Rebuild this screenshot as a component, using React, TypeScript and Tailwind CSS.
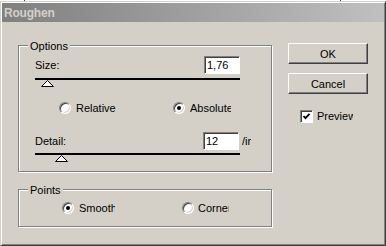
import React from 'react';

function Radio({ checked }: { checked?: boolean }) {
  return (
    <span className="flex h-[12px] w-[12px] shrink-0 items-center justify-center rounded-full border border-t-[#808080] border-l-[#808080] border-r-white border-b-white bg-white shadow-[inset_1px_1px_0_#404040,inset_-1px_-1px_0_#d4d0c8]">
      {checked && <span className="h-[4px] w-[4px] rounded-full bg-black" />}
    </span>
  );
}

function Field({ value }: { value: string }) {
  return (
    <div className="flex h-[18px] w-[36px] shrink-0 items-center border border-t-[#808080] border-l-[#808080] border-r-white border-b-white bg-white pl-[2px] shadow-[inset_1px_1px_0_#404040]">
      {value}
    </div>
  );
}

function Thumb() {
  return (
    <svg width="13" height="7" viewBox="0 0 13 7" className="block">
      <polygon points="6.5,0.5 12.5,6.5 0.5,6.5" fill="#fff" stroke="#000" strokeWidth="1" />
    </svg>
  );
}

function Button({ label }: { label: string }) {
  return (
    <div className="flex h-[21px] w-[80px] items-center justify-center border border-t-white border-l-white border-r-[#404040] border-b-[#404040] shadow-[inset_-1px_-1px_0_#808080]">
      {label}
    </div>
  );
}

export default function App() {
  return (
    <div className="h-[246px] w-[386px] bg-white font-['Liberation_Sans',Arial,sans-serif] text-[11px] leading-[14px] text-black">
      <div className="flex h-[1px]">
        <span className="ml-[24px] w-[1px] bg-[#404040]" />
        <span className="ml-[315px] w-[1px] bg-[#404040]" />
      </div>

      {/* dialog window */}
      <div className="flex h-[245px] w-[386px] flex-col border border-t-[#d4d0c8] border-l-[#d4d0c8] border-r-[#404040] border-b-[#404040] bg-[#d4d0c8] p-[1px] shadow-[inset_1px_1px_0_#fff,inset_-1px_-1px_0_#808080]">
        <div className="flex h-[19px] shrink-0 items-center bg-gradient-to-r from-[#808080] to-[#c0c0c0] pl-[2px] pt-[1px] text-[12px] font-bold tracking-[-0.2px] text-[#d4d0c8]">
          Roughen
        </div>

        <div className="flex items-start pl-[16px]">
          {/* left column */}
          <div className="mt-[23px] flex flex-col">
            {/* Options */}
            <div className="h-[127px] w-[254px] border border-[#808080] shadow-[inset_1px_1px_0_#fff,1px_1px_0_#fff]">
              <div className="-mt-[7px] ml-[9px] w-fit bg-[#d4d0c8] px-[2px]">Options</div>

              <div className="mt-[3px] ml-[16px] flex h-[18px] w-[205px] items-center justify-between">
                <span>Size:</span>
                <Field value="1,76" />
              </div>
              <div className="mt-[4px] ml-[16px] h-[2px] w-[205px] bg-black" />
              <div className="ml-[22px]">
                <Thumb />
              </div>

              <div className="mt-[14px] ml-[40px] flex h-[14px] items-center">
                <div className="flex w-[114px] items-center gap-[5px]">
                  <Radio />
                  <span>Relative</span>
                </div>
                <div className="flex items-center gap-[5px]">
                  <Radio checked />
                  <span className="w-[41px] overflow-hidden whitespace-nowrap">Absolute</span>
                </div>
              </div>

              <div className="mt-[17px] ml-[16px] flex h-[18px] w-[221px] items-center">
                <span className="flex-1">Detail:</span>
                <Field value="12" />
                <span className="ml-[3px] w-[9px] overflow-hidden whitespace-nowrap">/in</span>
                <span className="w-[5px]" />
              </div>
              <div className="mt-[3px] ml-[16px] h-[2px] w-[205px] bg-black" />
              <div className="ml-[36px]">
                <Thumb />
              </div>
            </div>

            {/* Points */}
            <div className="mt-[17px] h-[38px] w-[254px] border border-[#808080] shadow-[inset_1px_1px_0_#fff,1px_1px_0_#fff]">
              <div className="-mt-[7px] ml-[9px] w-fit bg-[#d4d0c8] px-[2px]">Points</div>
              <div className="mt-[4px] ml-[43px] flex h-[14px] items-center">
                <div className="flex w-[120px] items-center gap-[5px]">
                  <Radio checked />
                  <span className="w-[36px] overflow-hidden whitespace-nowrap">Smooth</span>
                </div>
                <div className="flex items-center gap-[4px]">
                  <Radio />
                  <span className="w-[31px] overflow-hidden whitespace-nowrap">Corner</span>
                </div>
              </div>
            </div>
          </div>

          {/* right column */}
          <div className="mt-[21px] ml-[16px] flex flex-col">
            <Button label="OK" />
            <div className="mt-[9px]">
              <Button label="Cancel" />
            </div>
            <div className="mt-[15px] ml-[12px] flex h-[14px] items-center gap-[4px]">
              <span className="flex h-[13px] w-[13px] items-center justify-center border border-t-[#808080] border-l-[#808080] border-r-white border-b-white bg-white shadow-[inset_1px_1px_0_#404040]">
                <svg width="9" height="9" viewBox="0 0 9 9" className="block">
                  <path d="M1.5 4 L3.5 6.2 L7.5 1.8" fill="none" stroke="#000" strokeWidth="1.8" />
                </svg>
              </span>
              <span className="w-[36px] overflow-hidden whitespace-nowrap">Preview</span>
            </div>
          </div>
        </div>
      </div>
    </div>
  );
}
